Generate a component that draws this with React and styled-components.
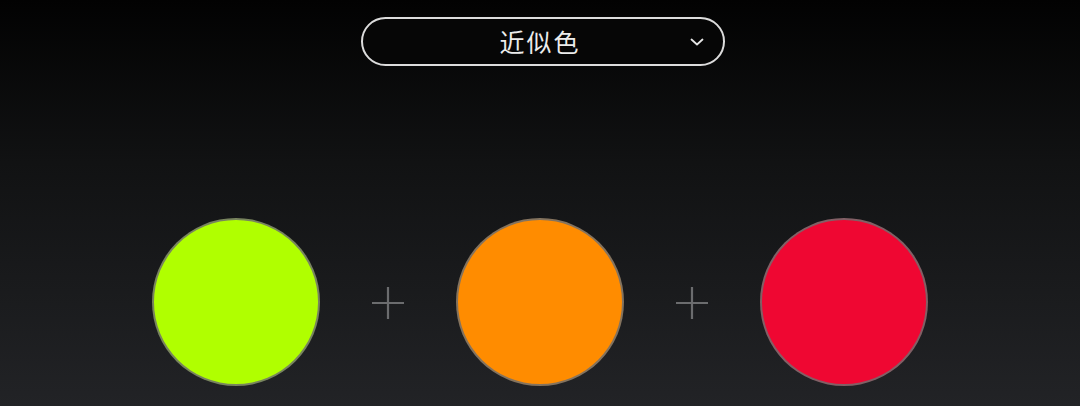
import styled, { createGlobalStyle } from 'styled-components';

const colors = ['#b0ff00', '#ff8c00', '#ef0732'];

const GlobalStyle = createGlobalStyle`
  html, body {
    margin: 0;
    padding: 0;
    background: #000;
  }
  * {
    box-sizing: border-box;
  }
`;

function App() {
  return (
    <>
      <GlobalStyle />
      <Page>
        <Select>
          <SelectLabel>近似色</SelectLabel>
          <Chevron viewBox="0 0 14 10">
            <path d="M1.5 2.5 L7 7.5 L12.5 2.5" fill="none" stroke="#e6e6e6" strokeWidth="1.8" strokeLinecap="round" strokeLinejoin="round" />
          </Chevron>
        </Select>
        <Swatches>
          {colors.map((color, id) => (
            <SwatchGroup key={color}>
              {id > 0 ? (
                <Plus>
                  <svg width="34" height="34" viewBox="0 0 34 34">
                    <path d="M17 1 V33 M1 17 H33" stroke="#6b6c6e" strokeWidth="2.2" />
                  </svg>
                </Plus>
              ) : null}
              <Swatch color={color} />
            </SwatchGroup>
          ))}
        </Swatches>
      </Page>
    </>
  );
}

const Page = styled.div`
  width: 1080px;
  height: 406px;
  overflow: hidden;
  display: flex;
  flex-direction: column;
  align-items: center;
  padding-top: 17px;
  background: linear-gradient(180deg, #020202 0%, #111213 40%, #222326 100%);
  font-family: 'Noto Sans CJK SC', 'Noto Sans', sans-serif;
`;

const Select = styled.div`
  position: relative;
  width: 364px;
  height: 49px;
  margin-left: 5px;
  padding-right: 5px;
  border: 2px solid #dcdcdc;
  border-radius: 300px;
  background: #060606;
  display: flex;
  justify-content: center;
  align-items: center;
`;

const SelectLabel = styled.div`
  color: #ececec;
  font-size: 25px;
  font-weight: 400;
  letter-spacing: 2px;
  line-height: 1;
`;

const Chevron = styled.svg`
  position: absolute;
  right: 19px;
  top: 18px;
  width: 14px;
  height: 10px;
`;

const Swatches = styled.div`
  margin-top: 152px;
  display: flex;
  align-items: center;
`;

const SwatchGroup = styled.div`
  display: flex;
  align-items: center;
`;

const Plus = styled.div`
  width: 136px;
  display: flex;
  justify-content: center;
  align-items: center;
  padding-top: 2px;
`;

const Swatch = styled.div`
  width: 168px;
  height: 168px;
  border-radius: 100%;
  background-color: ${(props) => props.color};
  border: 2px solid rgba(110, 110, 110, 0.85);
`;

export default App;
